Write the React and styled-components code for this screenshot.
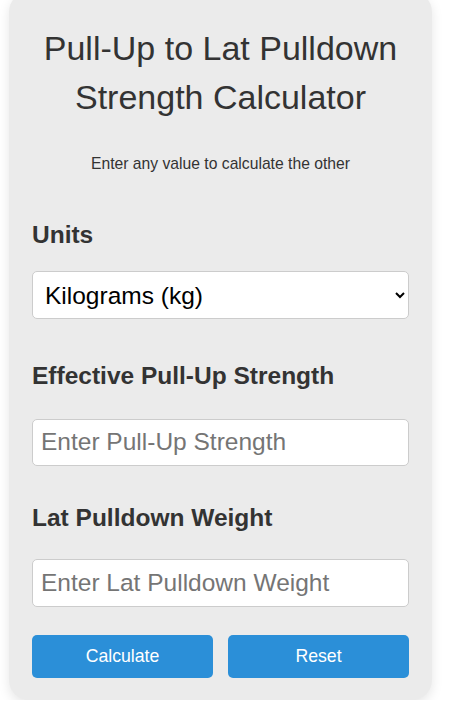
import React, { useState } from "react";
import styled, { createGlobalStyle } from "styled-components";

const GlobalStyle = createGlobalStyle`
  html, body {
    margin: 0;
    padding: 0;
    background: #ffffff;
    font-family: "Liberation Sans", Arial, sans-serif;
  }
  * {
    box-sizing: border-box;
  }
`;

const Card = styled.div`
  width: 423px;
  margin: -8px 0 0 9px;
  padding: 32px 23px 22px;
  background: #ebebeb;
  border-radius: 20px;
  box-shadow: 0 4px 12px rgba(0, 0, 0, 0.1);
  color: #333;
`;

const Title = styled.h1`
  margin: 0;
  font-size: 34px;
  line-height: 48.5px;
  font-weight: normal;
  text-align: center;
  color: #333;
`;

const Subtitle = styled.p`
  margin: 33.5px 0 0;
  font-size: 15.7px;
  text-align: center;
  color: #333;
`;

const Group = styled.div`
  display: flex;
  flex-direction: column;
  margin-top: ${({ $top }) => $top}px;
`;

const Label = styled.label`
  display: block;
  font-size: 24.5px;
  font-weight: bold;
  color: #333;
`;

const Select = styled.select`
  width: 100%;
  height: 47.6px;
  margin-top: 22px;
  padding: 0 8px;
  font-family: inherit;
  font-size: 24.5px;
  color: #000;
  background: #fff;
  border: 1px solid #ccc;
  border-radius: 5px;
`;

const Input = styled.input`
  width: 100%;
  height: 47.4px;
  margin-top: ${({ $top }) => $top}px;
  padding: 0 8px;
  font-family: inherit;
  font-size: 24.5px;
  color: #000;
  background: #fff;
  border: 1px solid #ccc;
  border-radius: 5px;
  &::placeholder {
    color: #757575;
  }
`;

const ButtonRow = styled.div`
  display: flex;
  gap: 15px;
  margin-top: 28.3px;
`;

const Button = styled.button`
  flex: 1;
  height: 42.7px;
  font-family: inherit;
  font-size: 17.7px;
  color: #fff;
  background: #2b8fd8;
  border: none;
  border-radius: 5px;
  cursor: pointer;
`;

export default function App() {
  const [unit, setUnit] = useState("kg");
  const [pullUp, setPullUp] = useState("");
  const [pulldown, setPulldown] = useState("");

  const calculate = () => {
    if (pullUp) setPulldown((parseFloat(pullUp) * 0.9).toFixed(1));
    else if (pulldown) setPullUp((parseFloat(pulldown) / 0.9).toFixed(1));
  };

  const reset = () => {
    setPullUp("");
    setPulldown("");
  };

  return (
    <>
      <GlobalStyle />
      <Card>
        <Title>Pull-Up to Lat Pulldown Strength Calculator</Title>
        <Subtitle>Enter any value to calculate the other</Subtitle>

        <Group $top={48.8}>
          <Label htmlFor="units">Units</Label>
          <Select id="units" value={unit} onChange={(e) => setUnit(e.target.value)}>
            <option value="kg">Kilograms (kg)</option>
            <option value="lb">Pounds (lb)</option>
          </Select>
        </Group>

        <Group $top={43.4}>
          <Label htmlFor="pullup">Effective Pull-Up Strength</Label>
          <Input
            id="pullup"
            type="number"
            $top={28.4}
            placeholder="Enter Pull-Up Strength"
            value={pullUp}
            onChange={(e) => setPullUp(e.target.value)}
          />
        </Group>

        <Group $top={38.4}>
          <Label htmlFor="pulldown">Lat Pulldown Weight</Label>
          <Input
            id="pulldown"
            type="number"
            $top={27}
            placeholder="Enter Lat Pulldown Weight"
            value={pulldown}
            onChange={(e) => setPulldown(e.target.value)}
          />
        </Group>

        <ButtonRow>
          <Button onClick={calculate}>Calculate</Button>
          <Button onClick={reset}>Reset</Button>
        </ButtonRow>
      </Card>
    </>
  );
}
